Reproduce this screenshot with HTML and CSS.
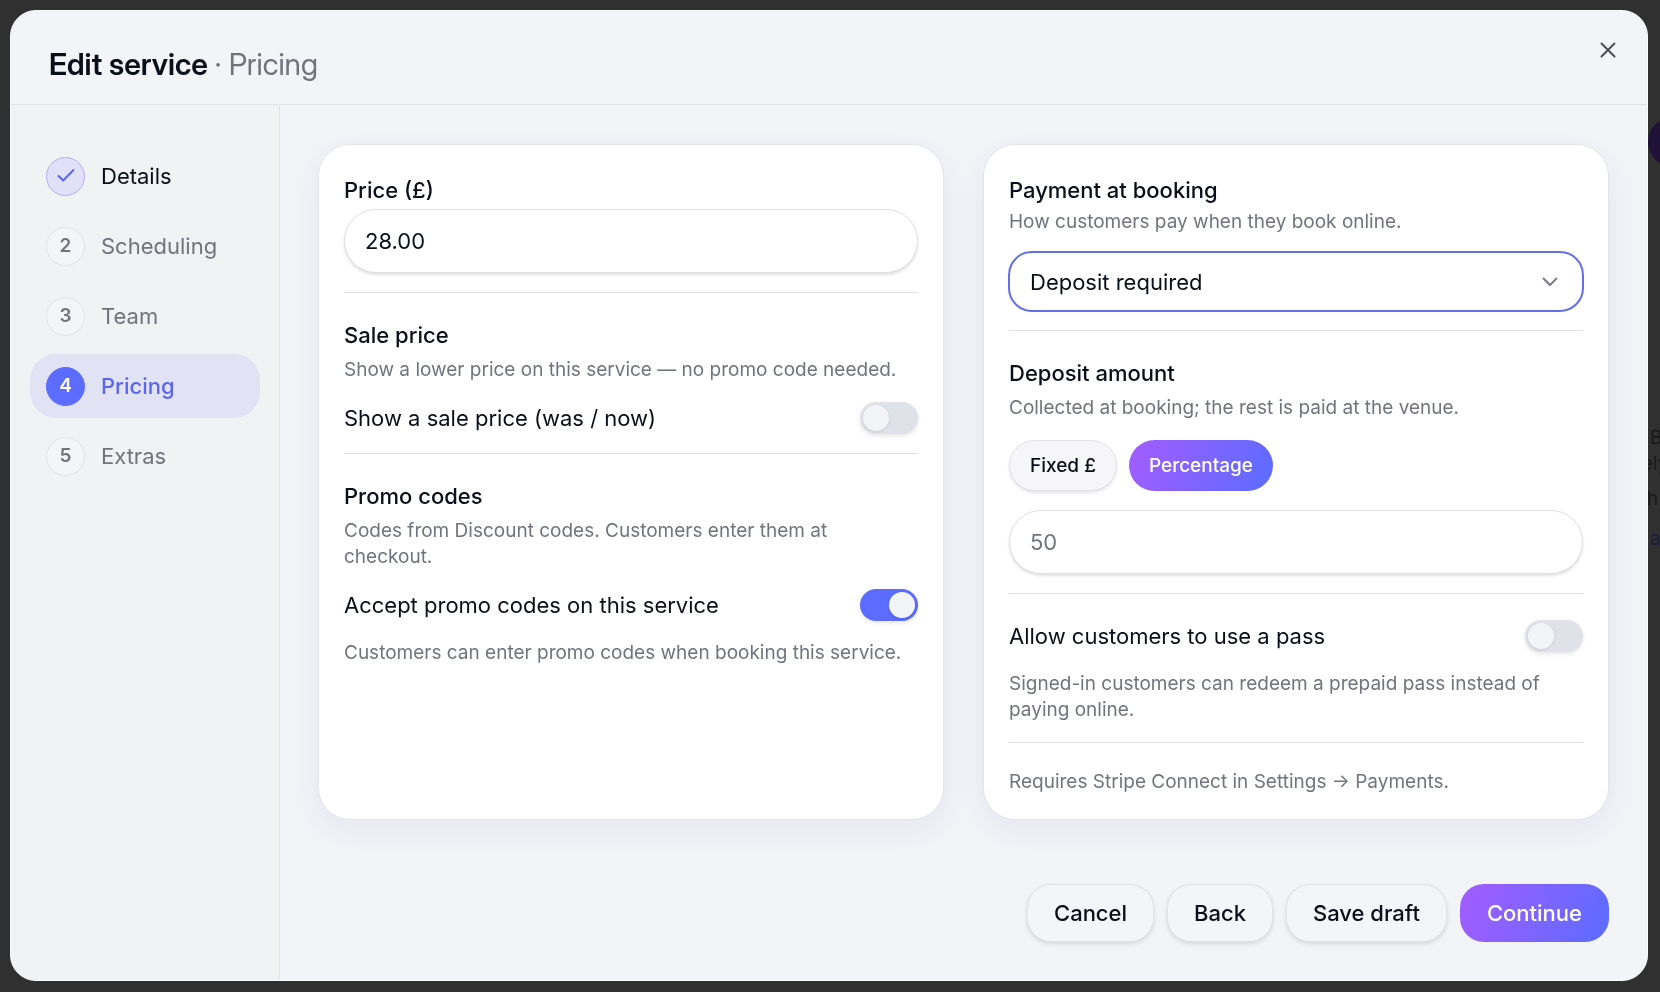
FILE: index.html
```html
<!DOCTYPE html>
<html lang="en">
<head>
	<meta charset="UTF-8">
	<meta name="viewport" content="width=device-width, initial-scale=1">
	<title>Edit service</title>
	<link rel="stylesheet" href="styles.css">
</head>
<body>
	<div class="behind">
		<span class="behind-avatar"></span>
		<p class="behind-text behind-b">B</p>
		<p class="behind-text behind-el">ely</p>
		<p class="behind-text behind-h">h</p>
		<p class="behind-text behind-a">a</p>
	</div>

	<div class="modal" role="dialog" aria-labelledby="modal-title">
		<header class="modal-header">
			<h1 class="modal-title" id="modal-title">Edit service <span>· Pricing</span></h1>
			<button class="close" type="button" aria-label="Close">
				<svg width="16" height="16" viewBox="0 0 16 16" fill="none" stroke="currentColor" stroke-width="2" stroke-linecap="round"><path d="M1.5 1.5l13 13M14.5 1.5l-13 13"/></svg>
			</button>
		</header>

		<div class="modal-body">
			<nav class="steps">
				<a class="step done" href="#details">
					<span class="step-num">
						<svg width="18" height="18" viewBox="0 0 18 18" fill="none" stroke="currentColor" stroke-width="2" stroke-linecap="round" stroke-linejoin="round"><path d="M1.500 9l4.700 4.500L16.500 3"/></svg>
					</span>
					Details
				</a>
				<a class="step" href="#scheduling"><span class="step-num">2</span>Scheduling</a>
				<a class="step" href="#team"><span class="step-num">3</span>Team</a>
				<a class="step active" href="#pricing"><span class="step-num">4</span>Pricing</a>
				<a class="step" href="#extras"><span class="step-num">5</span>Extras</a>
			</nav>

			<form class="content">
				<div class="cards">
					<div class="card">
						<section class="group">
							<label class="group-title" for="price">Price (£)</label>
							<input class="text-input" id="price" type="text" value="28.00">
						</section>
						<section class="group">
							<h2 class="group-title">Sale price</h2>
							<p class="hint">Show a lower price on this service — no promo code needed.</p>
							<div class="toggle-row">
								<label for="sale">Show a sale price (was / now)</label>
								<input class="toggle" id="sale" type="checkbox">
							</div>
						</section>
						<section class="group">
							<h2 class="group-title">Promo codes</h2>
							<p class="hint">Codes from Discount codes. Customers enter them at checkout.</p>
							<div class="toggle-row">
								<label for="promo">Accept promo codes on this service</label>
								<input class="toggle" id="promo" type="checkbox" checked>
							</div>
							<p class="hint after">Customers can enter promo codes when booking this service.</p>
						</section>
					</div>

					<div class="card">
						<section class="group">
							<label class="group-title" for="payment">Payment at booking</label>
							<p class="hint tight">How customers pay when they book online.</p>
							<div class="select-wrap">
								<select class="select" id="payment">
									<option>Deposit required</option>
								</select>
								<svg class="chevron" width="16" height="10" viewBox="0 0 16 10" fill="none" stroke="currentColor" stroke-width="2" stroke-linecap="round" stroke-linejoin="round"><path d="M1.5 1.5L8 8l6.500-6.500"/></svg>
							</div>
						</section>
						<section class="group">
							<label class="group-title" for="deposit">Deposit amount</label>
							<p class="hint">Collected at booking; the rest is paid at the venue.</p>
							<div class="pills">
								<button class="pill" type="button">Fixed £</button>
								<button class="pill primary" type="button">Percentage</button>
							</div>
							<input class="text-input" id="deposit" type="text" placeholder="50">
						</section>
						<section class="group">
							<div class="toggle-row">
								<label for="pass">Allow customers to use a pass</label>
								<input class="toggle" id="pass" type="checkbox">
							</div>
							<p class="hint after">Signed-in customers can redeem a prepaid pass instead of paying online.</p>
						</section>
						<section class="group">
							<p class="hint note">Requires Stripe Connect in Settings → Payments.</p>
						</section>
					</div>
				</div>

				<footer class="actions">
					<button class="btn" type="button">Cancel</button>
					<button class="btn" type="button">Back</button>
					<button class="btn" type="button">Save draft</button>
					<button class="btn primary" type="submit">Continue</button>
				</footer>
			</form>
		</div>
	</div>
</body>
</html>
```
FILE: styles.css
```css
* {
	box-sizing: border-box;
}
body {
	margin: 0;
	min-height: 100vh;
	padding: 10px 12px 11px 10px;
	display: flex;
	background: #303030;
	color: #0b0f19;
	font-family: Inter, "Liberation Sans", sans-serif;
	font-size: 22px;
	line-height: 32px;
}
h1, h2, p {
	margin: 0;
}
button, input, select {
	font: inherit;
	color: inherit;
}

/* page under the overlay */
.behind {
	position: fixed;
	inset: 0;
	overflow: hidden;
	color: #191919;
}
.behind-avatar {
	position: absolute;
	top: 117px;
	right: -38px;
	width: 50px;
	height: 50px;
	border-radius: 50%;
	background: #1f1138;
}
.behind-text {
	position: absolute;
	left: 1650px;
	font-size: 19px;
	line-height: 26px;
}
.behind-b {
	top: 425px;
}
.behind-el {
	left: 1642px;
	top: 451px;
}
.behind-h {
	left: 1647px;
	top: 486px;
}
.behind-a {
	top: 526px;
	color: #1b1d38;
}

.modal {
	position: relative;
	flex: 1;
	display: flex;
	flex-direction: column;
	background: #f3f4f8;
	border: 1px solid #f8f9fb;
	border-radius: 26px;
	overflow: hidden;
}
.modal-header {
	display: flex;
	justify-content: space-between;
	align-items: flex-start;
	padding: 24px 24px 22px 38px;
	border-bottom: 1px solid #e2e4e8;
}
.modal-title {
	margin-top: 11px;
	font-family: "Inter Display", Inter, "Liberation Sans", sans-serif;
	font-size: 30px;
	line-height: 36px;
	font-weight: 600;
}
.modal-title span {
	color: #70747c;
	font-weight: 400;
}
.close {
	display: flex;
	padding: 7px;
	border: 0;
	background: none;
	color: #4b4f58;
}

.modal-body {
	flex: 1;
	display: flex;
}
.steps {
	flex: 0 0 269px;
	display: flex;
	flex-direction: column;
	gap: 6px;
	padding: 39px 19px;
	background: #f0f2f4;
	border-right: 1px solid #e2e4e8;
}
.step {
	display: flex;
	align-items: center;
	gap: 16px;
	height: 64px;
	padding: 0 16px;
	border-radius: 26px;
	color: #70747c;
	text-decoration: none;
}
.step-num {
	display: flex;
	align-items: center;
	justify-content: center;
	width: 39px;
	height: 39px;
	border: 1px solid #e2e4e8;
	border-radius: 50%;
	background: #f4f5f9;
	font-size: 19px;
	font-weight: 600;
}
.step.done {
	color: #0b0f19;
}
.step.done .step-num {
	border-color: #b6aff3;
	background: #e0e1f8;
	color: #5b65e8;
}
.step.active {
	background: #e2e2f5;
	color: #5b65ee;
	font-weight: 500;
}
.step.active .step-num {
	border-color: #5b6cff;
	background: #5b6cff;
	color: #fff;
}

.content {
	flex: 1;
	display: flex;
	flex-direction: column;
	justify-content: space-between;
	gap: 40px;
	padding: 39px 38px 38px;
}
.cards {
	display: grid;
	grid-template-columns: 1fr 1fr;
	gap: 39px;
}
.card {
	padding: 3px 25px 0;
	background: #fff;
	border: 1px solid #e4e5ea;
	border-radius: 32px;
	box-shadow: 0 10px 32px rgba(60, 60, 140, .07);
}
.group {
	padding: 26px 0 19px;
	border-bottom: 1px solid #dfe0e3;
}
.group:last-child {
	padding-bottom: 24px;
	border-bottom: 0;
}
.group-title {
	display: block;
	font-size: 22px;
	line-height: 32px;
	font-weight: 500;
}
.hint {
	margin-top: 6px;
	color: #70747c;
	font-size: 19px;
	line-height: 26px;
}
.hint.tight {
	margin-top: 3px;
}
.hint.after {
	margin-top: 19px;
}
.hint.note {
	margin-top: 0;
}
.text-input {
	display: block;
	width: 100%;
	height: 64px;
	margin-top: 3px;
	padding: 0 20px;
	border: 1px solid #e0e0e3;
	border-radius: 32px;
	background: #fff;
	box-shadow: 0 2px 3px rgba(0, 0, 0, .12);
}
.text-input::placeholder {
	color: #70747c;
}
.toggle-row {
	display: flex;
	align-items: center;
	justify-content: space-between;
}
.hint + .toggle-row {
	margin-top: 19px;
}
.toggle {
	appearance: none;
	flex: none;
	width: 58px;
	height: 32px;
	margin: 0;
	padding: 3px;
	border-radius: 16px;
	background: #e0e2e9;
	box-shadow: 0 2px 4px rgba(0, 0, 0, .1);
}
.toggle::before {
	content: "";
	display: block;
	width: 26px;
	height: 26px;
	border-radius: 50%;
	background: #f3f4f8;
	box-shadow: 0 1px 3px rgba(0, 0, 0, .1);
}
.toggle:checked {
	background: #5b6cff;
}
.toggle:checked::before {
	margin-left: auto;
}
.select-wrap {
	position: relative;
	margin: 16px -1px -1px;
}
.select {
	appearance: none;
	display: block;
	width: 100%;
	height: 61px;
	padding: 0 20px;
	border: 2px solid #626fe6;
	border-radius: 24px;
	background: #fff;
}
.chevron {
	position: absolute;
	top: 26px;
	right: 26px;
	color: #777a80;
	pointer-events: none;
}
.pills {
	display: flex;
	gap: 12px;
	margin: 19px 0;
}
.pill {
	height: 51px;
	padding: 0 20px;
	border: 1px solid #e2e3e7;
	border-radius: 26px;
	background: #f6f6f9;
	box-shadow: 0 2px 3px rgba(0, 0, 0, .1);
	font-size: 19px;
	font-weight: 500;
}
.actions {
	display: flex;
	justify-content: flex-end;
	gap: 13px;
}
.btn {
	height: 58px;
	padding: 0 26px;
	border: 1px solid #e2e3e7;
	border-radius: 24px;
	background: #f4f5f9;
	box-shadow: 0 2px 4px rgba(0, 0, 0, .12);
	font-weight: 500;
}
.primary {
	border: 0;
	background: linear-gradient(110deg, #a45cff, #5b6cff);
	box-shadow: none;
	color: #fff;
}
.btn.primary {
	padding: 0 27px;
}
```
